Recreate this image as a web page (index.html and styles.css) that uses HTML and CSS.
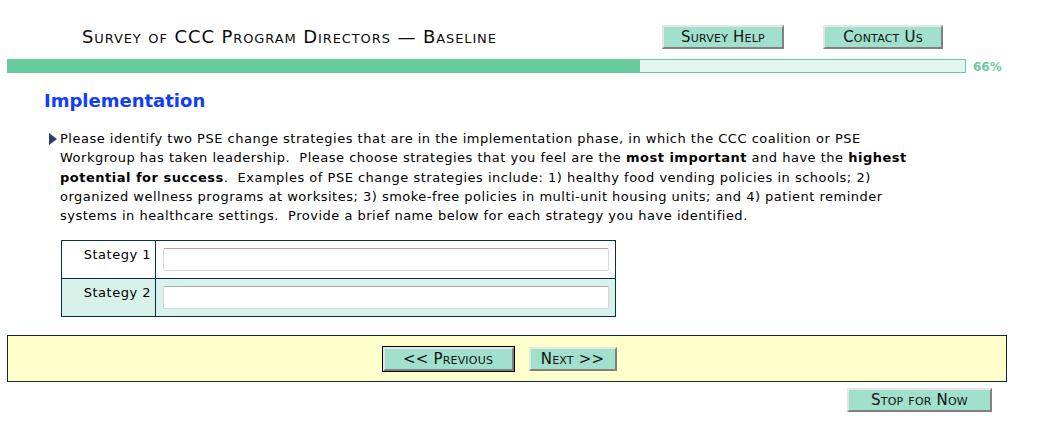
FILE: index.html
```html
<!DOCTYPE html>
<html>
<head>
<meta charset="utf-8">
<title>Survey of CCC Program Directors</title>
<link rel="stylesheet" href="styles.css">
</head>
<body>
<div class="page">
  <div class="header">
    <div class="title">Survey of CCC Program Directors — Baseline</div>
    <div class="header-buttons">
      <button class="btn btn-help">Survey Help</button>
      <button class="btn btn-contact">Contact Us</button>
    </div>
  </div>
  <div class="progress-row">
    <div class="progress">
      <div class="progress-fill"></div>
      <div class="progress-rest"></div>
    </div>
    <div class="progress-label">66%</div>
  </div>
  <div class="content">
    <h2 class="section-title">Implementation</h2>
    <div class="question">
      <span class="arrow"></span>
      <p class="question-text">Please identify two PSE change strategies that are in the implementation phase, in which the CCC coalition or PSE Workgroup has taken leadership.&nbsp; Please choose strategies that you feel are the <b>most important</b> and have the <b>highest potential for success</b>.&nbsp; Examples of PSE change strategies include: 1) healthy food vending policies in schools; 2) organized wellness programs at worksites; 3) smoke-free policies in multi-unit housing units; and 4) patient reminder systems in healthcare settings.&nbsp; Provide a brief name below for each strategy you have identified.</p>
    </div>
    <table class="answers">
      <tr class="row-odd">
        <td class="label">Stategy 1</td>
        <td class="field"><input type="text" class="text-input"></td>
      </tr>
      <tr class="row-even">
        <td class="label">Stategy 2</td>
        <td class="field"><input type="text" class="text-input"></td>
      </tr>
    </table>
  </div>
  <div class="nav-bar">
    <button class="btn btn-prev">&lt;&lt; Previous</button>
    <button class="btn btn-next">Next &gt;&gt;</button>
  </div>
  <div class="stop-row">
    <button class="btn btn-stop">Stop for Now</button>
  </div>
</div>
</body>
</html>
```
FILE: styles.css
```css
html, body {
  margin: 0;
  padding: 0;
  background: #ffffff;
}
body {
  font-family: "DejaVu Sans", Verdana, sans-serif;
  color: #000;
}
.page {
  width: 1038px;
}
.header {
  display: flex;
  align-items: center;
  height: 58px;
  box-sizing: border-box;
  padding-top: 16px;
  padding-left: 82px;
}
.title {
  font-variant: small-caps;
  font-size: 18px;
  letter-spacing: 0.9px;
  width: 580px;
  white-space: nowrap;
  padding-bottom: 2px;
  color: #0a0a0a;
}
.header-buttons {
  display: flex;
  gap: 39px;
}
.btn {
  font-family: "DejaVu Sans", Verdana, sans-serif;
  font-variant: small-caps;
  font-size: 15px;
  letter-spacing: 0.2px;
  color: #111;
  background: #a0e0cc;
  border: 2px solid;
  border-color: #e6e6e6 #808080 #808080 #e6e6e6;
  height: 24px;
  line-height: 18px;
  padding: 0;
  margin: 0;
  box-sizing: border-box;
}
.btn-help { width: 122px; }
.btn-contact { width: 120px; }
.progress-row {
  display: flex;
  align-items: center;
  padding-left: 7px;
}
.progress {
  display: flex;
  width: 959px;
  height: 14px;
}
.progress-fill {
  width: 633px;
  background: #66cc99;
}
.progress-rest {
  flex: 1;
  background: #e2f5ee;
  border: 1px solid #66cc99;
  border-left: none;
}
.progress-label {
  font-size: 12px;
  font-weight: bold;
  color: #66cc99;
  margin-left: 7px;
  padding-top: 2px;
}
.content {
  padding-left: 44px;
}
.section-title {
  font-size: 18px;
  font-weight: bold;
  color: #0f3cff;
  margin: 16px 0 0 0;
  line-height: 22px;
}
.question {
  position: relative;
  margin-top: 17px;
  padding-left: 16px;
  width: 858px;
}
.arrow {
  position: absolute;
  left: 5px;
  top: 4px;
  width: 0;
  height: 0;
  border-top: 6px solid transparent;
  border-bottom: 6px solid transparent;
  border-left: 8px solid #2b3f66;
}
.question-text {
  margin: 0;
  font-size: 13px;
  letter-spacing: 0.5px;
  line-height: 19.3px;
}
.answers {
  margin-top: 15px;
  margin-left: 17px;
  border-collapse: collapse;
  width: 555px;
}
.answers td {
  border: 1px solid #003344;
  height: 38px;
  box-sizing: border-box;
  vertical-align: top;
  padding: 0;
}
.row-even td {
  background: #d8f2ea;
}
.label {
  width: 94px;
  text-align: right;
  font-size: 13px;
  letter-spacing: 0.5px;
  padding: 6px 4px 0 0 !important;
}
.field {
  padding: 7px 6px 0 7px !important;
}
.text-input {
  display: block;
  width: 446px;
  height: 23px;
  box-sizing: border-box;
  border: 1px solid #d4d8dd;
  border-top-color: #a6a6ab;
  border-radius: 2px;
  background: #fff;
  margin: 0;
}
.nav-bar {
  margin: 18px 0 0 7px;
  width: 1000px;
  height: 47px;
  box-sizing: border-box;
  background: #ffffcc;
  border: 1px solid #0c2a33;
  display: flex;
  justify-content: center;
  align-items: center;
  gap: 15px;
  padding-right: 15px;
}
.btn-prev {
  width: 131px;
  outline: 1px solid #000;
  outline-offset: 0;
}
.btn-next {
  width: 88px;
}
.stop-row {
  display: flex;
  justify-content: flex-end;
  padding-right: 46px;
  margin-top: 6px;
}
.btn-stop {
  width: 145px;
}
```
